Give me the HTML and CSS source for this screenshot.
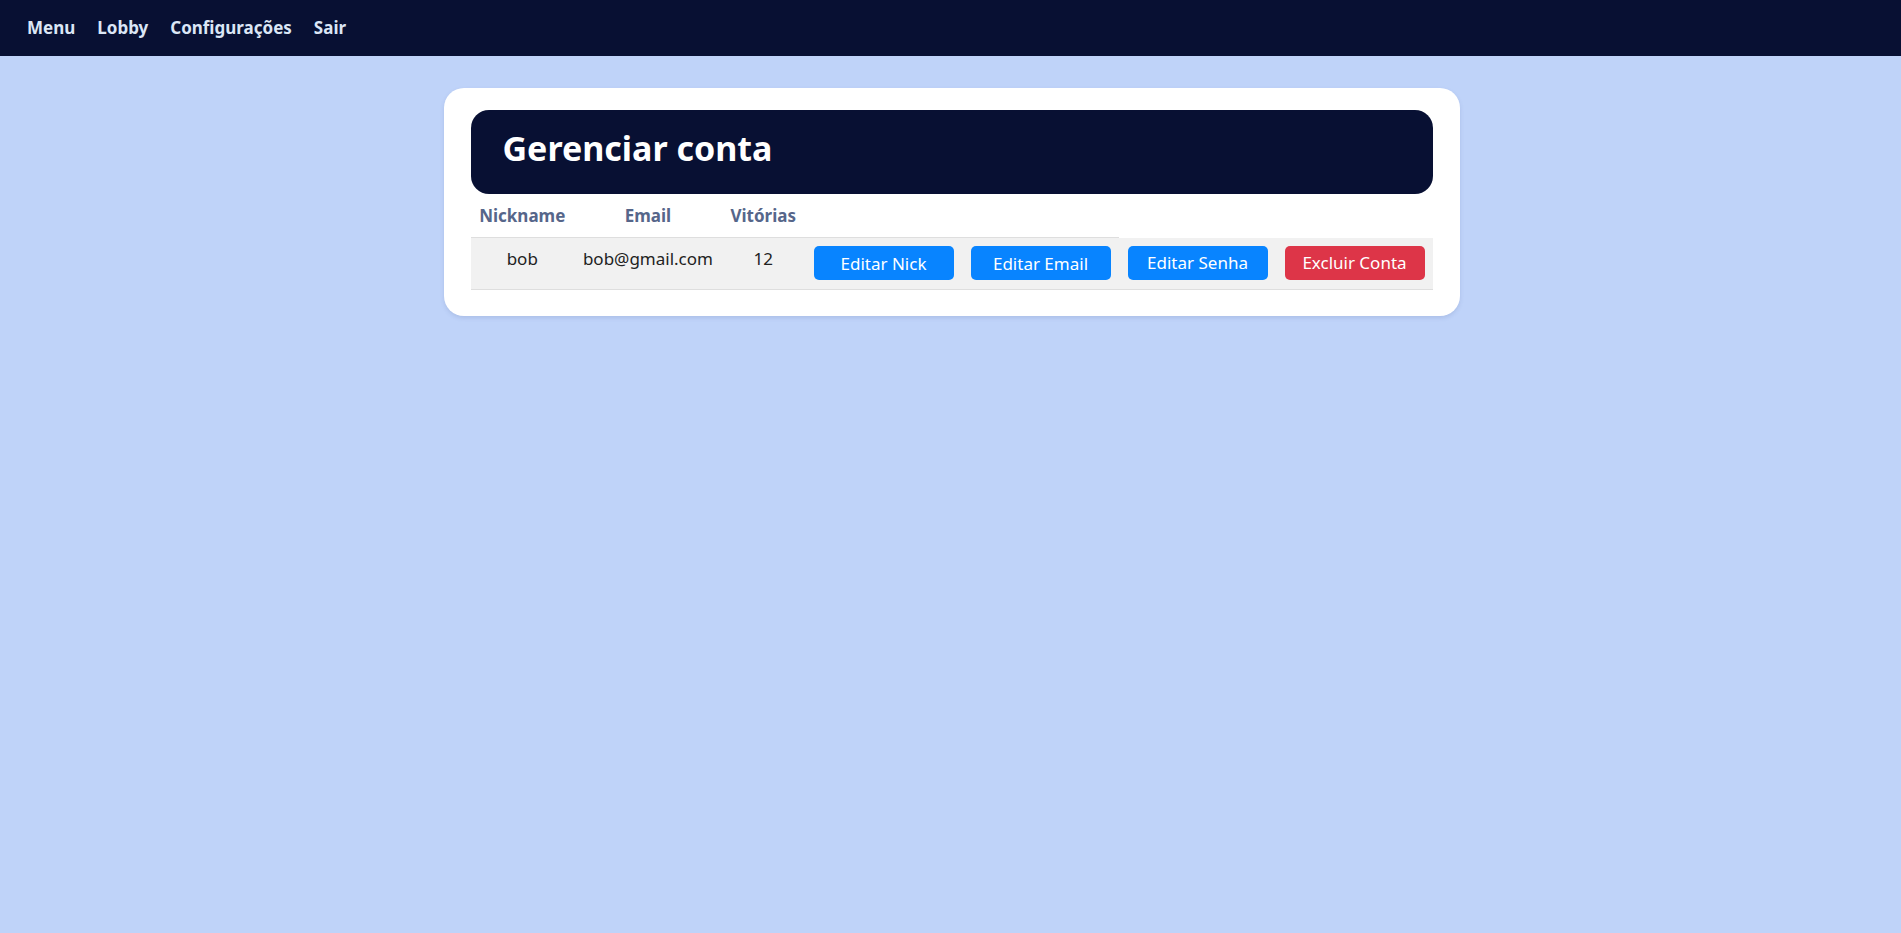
FILE: index.html
```html
<!DOCTYPE html>
<html lang="pt-BR">
<head>
<meta charset="utf-8">
<title>Gerenciar conta</title>
<link rel="stylesheet" href="styles.css">
</head>
<body>
<nav class="topbar">
  <a class="nav-link" href="#">Menu</a>
  <a class="nav-link" href="#">Lobby</a>
  <a class="nav-link" href="#">Configurações</a>
  <a class="nav-link" href="#">Sair</a>
</nav>
<main class="page">
  <section class="card">
    <header class="card-head">
      <h1 class="card-title">Gerenciar conta</h1>
    </header>
    <table class="acct">
      <thead>
        <tr>
          <th class="col-txt">Nickname</th>
          <th class="col-txt">Email</th>
          <th class="col-txt">Vitórias</th>
          <th class="col-act"></th>
          <th class="col-act"></th>
        </tr>
      </thead>
      <tbody>
        <tr>
          <td class="cell-txt">bob</td>
          <td class="cell-txt">bob@gmail.com</td>
          <td class="cell-txt">12</td>
          <td class="cell-act"><button class="btn btn-blue">Editar Nick</button></td>
          <td class="cell-act"><button class="btn btn-blue">Editar Email</button></td>
          <td class="cell-act"><button class="btn btn-blue">Editar Senha</button></td>
          <td class="cell-act"><button class="btn btn-red">Excluir Conta</button></td>
        </tr>
      </tbody>
    </table>
  </section>
</main>
</body>
</html>
```
FILE: styles.css
```css
html, body {
  margin: 0;
  padding: 0;
}
body {
  background: #bfd3f9;
  font-family: "Noto Sans", "Open Sans", sans-serif;
  font-size: 17px;
  color: #222;
  min-height: 933px;
}
.topbar {
  height: 56px;
  background: #081033;
  display: flex;
  align-items: center;
  gap: 22px;
  padding: 0 27px 1px;
  box-sizing: border-box;
}
.nav-link {
  color: #dbe6f6;
  font-weight: 700;
  font-size: 17px;
  text-decoration: none;
}
.page {
  display: flex;
  justify-content: center;
  padding: 32px 0 0 2px;
}
.card {
  width: 1016px;
  box-sizing: border-box;
  background: #fff;
  border-radius: 20px;
  padding: 22px 27px 26px;
  box-shadow: 0 2px 4px rgba(60, 80, 140, 0.15);
}
.card-head {
  background: #081033;
  border-radius: 18px;
  height: 84px;
  box-sizing: border-box;
  padding: 15px 32px 0;
}
.card-title {
  margin: 0;
  color: #fff;
  font-size: 34px;
  font-weight: 700;
}
.acct {
  width: 100%;
  border-collapse: collapse;
  font-size: 17px;
}
.acct th {
  color: #56668a;
  font-weight: 700;
  padding: 10px 8px;
  border-bottom: 1px solid #dedede;
  white-space: nowrap;
  text-align: center;
}
.acct tbody tr {
  background: #f1f1f1;
  border-bottom: 1px solid #dedede;
}
.cell-txt {
  vertical-align: top;
  text-align: center;
  padding: 9px 8px 0;
  white-space: nowrap;
  color: #222;
}
.cell-act {
  vertical-align: top;
  padding: 8px 8px 9px 9px;
  width: 140px;
}
.btn {
  display: block;
  width: 140px;
  height: 34px;
  border: none;
  border-radius: 5px;
  color: #fff;
  font-family: "Noto Sans", "Open Sans", sans-serif;
  font-size: 17px;
  padding: 0;
  cursor: pointer;
}
.btn-blue {
  background: #0884ff;
}
.btn-red {
  background: #dd3548;
}
```
